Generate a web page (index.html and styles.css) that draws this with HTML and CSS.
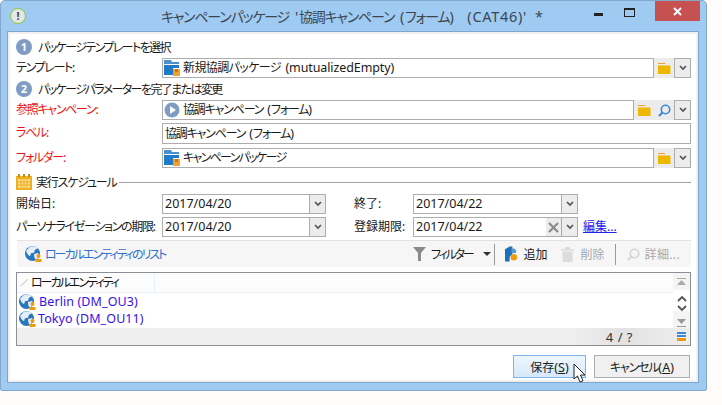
FILE: index.html
```html
<!DOCTYPE html>
<html lang="ja">
<head>
  <meta charset="UTF-8" />
  <title>キャンペーンパッケージ</title>
  <link rel="stylesheet" href="styles.css">
</head>
<body>
  <svg class="defs" width="0" height="0">
    <symbol id="pkg" viewBox="0 0 16 16">
      <path d="M0 0h7l1 2h7v2H0z" fill="#4a8fd0"/>
      <path d="M0 5h15v3H9v7H0z" fill="#1f7ac8"/>
      <path d="M9 9h7v7H9z" fill="#f0a030"/>
      <path d="M11 9h3v3h-3z" fill="#c87a10"/>
    </symbol>
    <symbol id="folder" viewBox="0 0 13 11">
      <path d="M0 0h7v1H0z" fill="#f0a030"/>
      <path d="M0 2h12v1H0z" fill="#f5c860"/>
      <path d="M0 3h12.500v8H0z" fill="#efb800"/>
    </symbol>
    <symbol id="chev" viewBox="0 0 8 6">
      <path d="M1 1l3 3 3-3" fill="none" stroke="#555" stroke-width="1.700"/>
    </symbol>
    <symbol id="globe" viewBox="0 0 17 16">
      <circle cx="7.500" cy="7.500" r="7.500" fill="#2a76bc"/>
      <path d="M5 .5l5-.2 3 2-3 1.500-1 3-3 .5-1 3-2.500-2L1 5zM9 8l4-1 1.500 2-3 5-2-2z" fill="#e4eef8"/>
      <circle cx="13.500" cy="10" r="2" fill="#ee9a10"/>
      <path d="M10.500 13h6v3h-6z" fill="#ee9a10"/>
    </symbol>
    <symbol id="lens" viewBox="0 0 13 13">
      <circle cx="7.500" cy="5.500" r="4.200" fill="none" stroke="currentColor" stroke-width="1.600"/>
      <path d="M4.500 8.500L1 12" stroke="currentColor" stroke-width="2.200"/>
    </symbol>
  </svg>

  <div class="window">
    <header class="titlebar">
      <span class="app-icon">!</span>
      <span class="title">キャンペーンパッケージ <span class="lat">'</span>協調キャンペーン <span class="lat">(</span>フォーム<span class="lat">)</span>　<span class="lat">(CAT46)' *</span></span>
      <div class="win-btns">
        <span class="min"></span>
        <span class="max"></span>
        <span class="close">
          <svg width="9" height="9" viewBox="0 0 9 9"><path d="M1 1l7 7M8 1L1 8" stroke="#fff" stroke-width="2"/></svg>
        </span>
      </div>
    </header>

    <main class="client">
      <div class="section"><span class="num">1</span>パッケージテンプレートを選択</div>

      <div class="row">
        <label class="lbl">テンプレート:</label>
        <div class="field">
          <svg class="ico"><use href="#pkg"/></svg>
          <span class="wide">新規協調パッケージ <span class="lat snug">(mutualizedEmpty)</span></span>
        </div>
        <span class="tool"><svg class="folder"><use href="#folder"/></svg></span>
        <span class="drop"><svg class="chev"><use href="#chev"/></svg></span>
      </div>

      <div class="section sec2"><span class="num">2</span>パッケージパラメーターを完了または変更</div>

      <div class="row">
        <label class="lbl req">参照キャンペーン:</label>
        <div class="field">
          <svg class="ico" viewBox="0 0 16 16"><circle cx="8" cy="8" r="7.500" fill="#7f9cc4"/><path d="M6 4l6 4-6 4z" fill="#fff"/></svg>
          <span>協調キャンペーン <span class="lat">(</span>フォーム<span class="lat">)</span></span>
        </div>
        <span class="tool"><svg class="folder"><use href="#folder"/></svg></span>
        <span class="tool"><svg class="lens blue"><use href="#lens"/></svg></span>
        <span class="drop"><svg class="chev"><use href="#chev"/></svg></span>
      </div>

      <div class="row tall">
        <label class="lbl req">ラベル:</label>
        <div class="field plain"><span>協調キャンペーン <span class="lat">(</span>フォーム<span class="lat">)</span></span></div>
      </div>

      <div class="row folder-row">
        <label class="lbl req">フォルダー:</label>
        <div class="field">
          <svg class="ico"><use href="#pkg"/></svg>
          <span class="narrow">キャンペーンパッケージ</span>
        </div>
        <span class="tool"><svg class="folder"><use href="#folder"/></svg></span>
        <span class="drop"><svg class="chev"><use href="#chev"/></svg></span>
      </div>

      <div class="schedule">
        <svg class="cal" viewBox="0 0 16 16">
          <path d="M0 2h16v14H0z" fill="#efb020"/>
          <path d="M2 0h2v3H2zM7 0h2v3H7zM12 0h2v3h-2z" fill="#c88a10"/>
          <path d="M2 5h12v9H2z" fill="#f8dc90"/>
          <path d="M5 5v9M8 5v9M11 5v9M2 8h12M2 11h12" stroke="#efb020"/>
        </svg>
        <span>実行スケジュール</span>
        <i class="rule"></i>
      </div>

      <div class="dates">
        <label class="lbl kanji">開始日:</label>
        <div class="date"><span class="val lat">2017/04/20</span><span class="drop"><svg class="chev"><use href="#chev"/></svg></span></div>
        <label class="lbl2">終了:</label>
        <div class="date"><span class="val lat">2017/04/22</span><span class="drop"><svg class="chev"><use href="#chev"/></svg></span></div>
        <span></span>

        <label class="lbl">パーソナライゼーションの期限:</label>
        <div class="date"><span class="val lat">2017/04/20</span><span class="drop"><svg class="chev"><use href="#chev"/></svg></span></div>
        <label class="lbl2">登録期限:</label>
        <div class="date">
          <span class="val lat">2017/04/22</span>
          <span class="clear"><svg width="11" height="11" viewBox="0 0 11 11"><path d="M1 1l9 9M10 1l-9 9" stroke="#8a8a8a" stroke-width="2.200"/></svg></span>
          <span class="drop"><svg class="chev"><use href="#chev"/></svg></span>
        </div>
        <a class="edit" href="#">編集...</a>
      </div>

      <div class="toolbar">
        <svg class="globe"><use href="#globe"/></svg>
        <span class="list-title">ローカルエンティティのリスト</span>
        <span class="spacer"></span>
        <svg class="funnel" viewBox="0 0 13 14"><path d="M0 0h13L8 6v8H5V6z" fill="#8a8a8a"/></svg>
        <span class="tb-label filter">フィルター</span>
        <i class="caret"></i>
        <i class="sep"></i>
        <svg class="add" viewBox="0 0 14 16"><path d="M0 3l5-3h3v8l-3 3v5H0z" fill="#1f6fb8"/><path d="M7 2h3l2 2v3H7z" fill="#5a9ad8"/><circle cx="9.500" cy="11.500" r="3.500" fill="#f09a10"/></svg>
        <span class="tb-label">追加</span>
        <svg class="trash" viewBox="0 0 13 15"><path d="M0 2h13v1.500H0zM4 0h5v2H4zM1.500 4.500h10V15h-10z" fill="#dcdcdc"/></svg>
        <span class="tb-label off">削除</span>
        <i class="sep"></i>
        <svg class="lens grey"><use href="#lens"/></svg>
        <span class="tb-label off detail">詳細...</span>
      </div>

      <div class="list">
        <div class="list-main">
          <div class="list-cols">
            <div class="list-head"><span class="sort">∕</span><span class="col">ローカルエンティティ</span></div>
            <div class="list-row"><svg class="globe"><use href="#globe"/></svg><span class="pad lat">Berlin (DM_OU3)</span></div>
            <div class="list-row"><svg class="globe"><use href="#globe"/></svg><span class="lat">Tokyo (DM_OU11)</span></div>
          </div>
          <div class="scroll">
            <svg viewBox="0 0 9 8" class="end"><path d="M0 0h9v1H0zM4.500 2L9 7H0z" fill="#aaa"/></svg>
            <svg viewBox="0 0 10 7" class="step"><path d="M1 6l4-4 4 4" fill="none" stroke="#555" stroke-width="1.800"/></svg>
            <svg viewBox="0 0 10 7" class="step"><path d="M1 1l4 4 4-4" fill="none" stroke="#555" stroke-width="1.800"/></svg>
            <svg viewBox="0 0 9 8" class="end"><path d="M0 0h9L4.500 5zM0 7h9v1H0z" fill="#999"/></svg>
          </div>
        </div>
        <div class="list-foot">
          <span class="count lat">4 / ?</span>
          <span class="lines"><i></i><i></i><i></i></span>
        </div>
      </div>

      <div class="actions">
        <button class="btn save">保存<span class="lat">(<u>S</u>)</span></button>
        <button class="btn cancel">キャンセル<span class="lat">(<u>A</u>)</span></button>
        <svg class="cursor" viewBox="0 0 13 20"><path d="M1 1v15l3.500-3 2.500 6 3-1.200-2.500-5.800H12z" fill="#fff" stroke="#222" stroke-width="1"/></svg>
      </div>
    </main>
  </div>
</body>
</html>
```

FILE: styles.css
```css
* {
  box-sizing: border-box;
}

body {
  margin: 0;
  width: 722px;
  height: 405px;
  overflow: hidden;
  background-color: #fdfcfa;
  font-family: "Noto Sans", "Noto Sans CJK JP", sans-serif;
  font-size: 12px;
  font-feature-settings: "palt";
  letter-spacing: -1.2px;
  color: #1a1a1a;
}

.lat {
  font-size: 12.5px;
  letter-spacing: 0.1px;
}

.snug {
  letter-spacing: -0.1px;
}

.defs {
  position: absolute;
}

.window {
  width: 707px;
  height: 391px;
  background-color: #9fcbf2;
  border: 1px solid #84a8cc;
  border-radius: 5px 5px 2px 2px;
}

.titlebar {
  display: flex;
  align-items: center;
  height: 30px;
  position: relative;
  padding-left: 9px;
}

.app-icon {
  width: 16px;
  height: 16px;
  border-radius: 50%;
  border: 1px solid #8cc63f;
  background-color: #e6e6e6;
  color: #444;
  font-size: 11px;
  font-weight: bold;
  line-height: 14px;
  letter-spacing: 0;
  text-align: center;
}

.title {
  position: absolute;
  left: 160px;
  top: 5px;
  font-size: 14px;
  line-height: 20px;
  word-spacing: 3.5px;
  color: #3c4650;
  white-space: nowrap;
}

.title .lat {
  font-size: 14.5px;
  letter-spacing: 0.7px;
}

.win-btns {
  position: absolute;
  top: 0;
  right: 6px;
  display: flex;
  align-items: flex-start;
}

.win-btns .min {
  width: 9px;
  height: 3px;
  margin: 12px 21px 0 0;
  background-color: #222;
}

.win-btns .max {
  width: 11px;
  height: 9px;
  margin: 7px 20px 0 0;
  border: 1px solid #222;
  border-top-width: 2px;
}

.win-btns .close {
  display: flex;
  align-items: center;
  justify-content: center;
  width: 45px;
  height: 20px;
  background-color: #c75050;
}

.client {
  width: 692px;
  height: 352px;
  margin-left: 6px;
  padding: 7px 7px 0 8px;
  background-color: #fff;
  border: 1px solid #7ea6cf;
  box-shadow: inset 2px 2px 0 #f0f0f0, inset -2px -2px 0 #f0f0f0;
}

.section {
  display: flex;
  align-items: center;
  height: 16px;
  margin-bottom: 3px;
  letter-spacing: -1.6px;
}

.sec2 {
  margin-top: 3px;
}

.num {
  display: inline-block;
  flex: none;
  width: 16px;
  height: 16px;
  margin-right: 6px;
  border-radius: 50%;
  background-color: #7f9cc4;
  color: #fff;
  font-size: 11px;
  font-weight: bold;
  line-height: 16px;
  letter-spacing: 0;
  text-align: center;
}

.row {
  display: flex;
  align-items: stretch;
  height: 20px;
}

.tall {
  height: 21px;
  margin: 3px 0 4px;
}

.lbl {
  flex: none;
  width: 146px;
  line-height: 20px;
  letter-spacing: -1.3px;
  white-space: nowrap;
}

.kanji {
  letter-spacing: 0;
}

.req {
  color: #f01010;
}

.field {
  display: flex;
  flex: 1;
  align-items: center;
  gap: 3px;
  padding-left: 1px;
  border: 1px solid #adadad;
  line-height: 18px;
  word-spacing: 2px;
  white-space: nowrap;
  min-width: 0;
}

.wide {
  letter-spacing: -0.6px;
}

.narrow {
  letter-spacing: -1.7px;
}

.plain {
  padding-left: 2px;
}

.ico {
  flex: none;
  width: 16px;
  height: 16px;
}

.tool {
  display: flex;
  flex: none;
  align-items: center;
  justify-content: center;
  width: 20px;
  background-color: #ececec;
}

.folder {
  width: 13px;
  height: 11px;
}

.lens {
  width: 13px;
  height: 13px;
}

.blue {
  color: #3a8ad8;
}

.grey {
  color: #d4d4d4;
  margin-right: 5px;
}

.drop {
  display: flex;
  flex: none;
  align-items: center;
  justify-content: center;
  width: 17px;
  background-color: #ececec;
  border: 1px solid #adadad;
}

.chev {
  width: 8px;
  height: 6px;
}

.schedule {
  display: flex;
  align-items: center;
  height: 16px;
  margin: 6px 0 4px;
}

.cal {
  flex: none;
  width: 16px;
  height: 16px;
  margin-right: 4px;
}

.rule {
  flex: 1;
  height: 1px;
  margin-left: 2px;
  background-color: #a0a0a0;
}

.dates {
  display: grid;
  grid-template-columns: 146px 164px 87px 165px 1fr;
  grid-auto-rows: 20px;
  row-gap: 3px;
  align-items: stretch;
  line-height: 20px;
}

.lbl2 {
  padding-left: 28px;
  letter-spacing: 0;
  white-space: nowrap;
}

.date {
  display: flex;
  border: 1px solid #adadad;
}

.val {
  flex: 1;
  padding-left: 2px;
  line-height: 18px;
  letter-spacing: 0;
}

.date .drop {
  border-width: 0 0 0 1px;
  width: 16px;
}

.clear {
  display: flex;
  align-items: center;
  justify-content: center;
  width: 15px;
  background-color: #ececec;
}

.edit {
  margin-left: 5px;
  letter-spacing: 0;
  color: #2222ee;
}

.toolbar {
  display: flex;
  align-items: center;
  height: 27px;
  margin: 3px 0 0 1px;
  padding: 0 11px 0 8px;
  background-color: #f6f6f6;
  border-top: 1px solid #e2e2e2;
}

.globe {
  flex: none;
  width: 17px;
  height: 16px;
}

.list-title {
  margin-left: 3px;
  letter-spacing: -2px;
  color: #2f6fd0;
}

.spacer {
  flex: 1;
}

.funnel {
  width: 13px;
  height: 14px;
  margin-right: 5px;
}

.tb-label {
  letter-spacing: 0;
  white-space: nowrap;
}

.filter {
  letter-spacing: -2.2px;
}

.detail {
  letter-spacing: 0.35px;
}

.off {
  color: #a8a8a8;
}

.caret {
  width: 0;
  height: 0;
  margin: 0 3px 0 10px;
  border: 4px solid transparent;
  border-top-color: #333;
  border-bottom-width: 0;
}

.sep {
  width: 1px;
  height: 21px;
  margin: 0 10px 0 0;
  background-color: #999;
}

.off + .sep {
  margin: 0 11px 0 10px;
}

.add {
  width: 13px;
  height: 16px;
  margin-right: 6px;
}

.trash {
  width: 13px;
  height: 15px;
  margin: 0 7px 0 13px;
}

.list {
  height: 74px;
  margin-top: 5px;
  border: 1px solid #8a8f98;
}

.list-main {
  display: flex;
  height: 55px;
}

.list-cols {
  flex: 1;
  overflow: hidden;
}

.list-head {
  display: flex;
  align-items: center;
  height: 20px;
  background-color: #fcfcfc;
  border-bottom: 1px solid #e8f0f8;
}

.sort {
  width: 14px;
  padding-left: 3px;
  font-size: 8px;
  color: #777;
}

.col {
  width: 124px;
  height: 19px;
  line-height: 19px;
  letter-spacing: -2px;
  border-right: 1px solid #e8f0f8;
  color: #111;
}

.list-row {
  display: flex;
  align-items: center;
  gap: 2px;
  height: 17px;
  padding-left: 2px;
  color: #3a10e8;
}

.pad {
  padding-left: 1px;
}

.scroll {
  display: flex;
  flex-direction: column;
  align-items: center;
  flex: none;
  width: 17px;
  padding-top: 5px;
  background: linear-gradient(#f4f4f4 17px, #fff 17px, #fff 38px, #f4f4f4 38px);
}

.end {
  width: 9px;
  height: 8px;
}

.step {
  width: 10px;
  height: 7px;
  margin-top: 3px;
}

.step:nth-child(2) {
  margin-top: 9px;
}

.step + .end {
  margin-top: 7px;
}

.list-foot {
  display: flex;
  align-items: center;
  justify-content: flex-end;
  height: 17px;
  background: linear-gradient(to right, #efefef 82%, #e2e2e2 90%, #eeeeee);
}

.count {
  margin-right: 44px;
  font-size: 13px;
  letter-spacing: 0.5px;
  color: #333;
}

.lines {
  display: flex;
  flex-direction: column;
  gap: 1px;
  width: 9px;
  margin-right: 4px;
}

.lines i {
  height: 2px;
  background-color: #3a8ad8;
}

.lines i:last-child {
  height: 3px;
  background-color: #f09a10;
}

.actions {
  display: flex;
  position: relative;
  justify-content: flex-end;
  gap: 8px;
  margin-top: 9px;
  padding-right: 1px;
}

.btn {
  height: 23px;
  padding: 0;
  font: inherit;
  letter-spacing: inherit;
  color: #222;
  border: 1px solid #adadad;
  background-color: #f0f0f0;
}

.save {
  width: 73px;
  letter-spacing: 0;
  border: 1px solid #7db4ea;
  background: linear-gradient(#eef6fd, #d6e9fa);
}

.cancel {
  width: 96px;
}

.cursor {
  position: absolute;
  left: 557px;
  top: 8px;
  width: 13px;
  height: 20px;
}
```
